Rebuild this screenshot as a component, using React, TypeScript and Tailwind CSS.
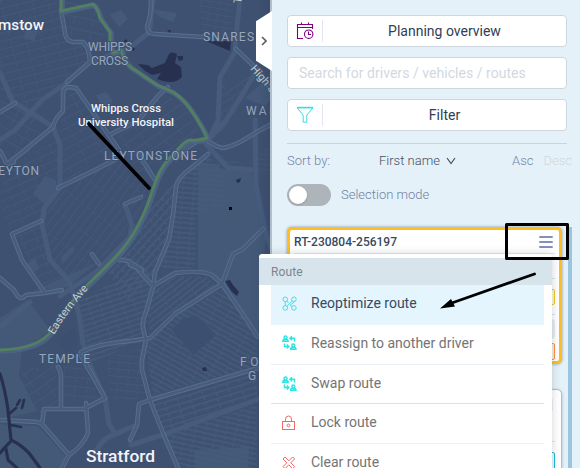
import React from "react";

type Patch = { points: string; angle: number; w: number; h: number; tone?: string };

const patches: Patch[] = [
  { points: "0,0 58,0 62,36 88,46 86,62 64,86 32,108 14,98 0,72", angle: -14, w: 15, h: 8 },
  { points: "64,0 92,4 108,35 104,46 66,38", angle: 12, w: 19, h: 12 },
  { points: "0,78 28,112 50,128 12,158 0,155", angle: 28, w: 17, h: 11 },
  { points: "66,92 76,92 114,150 60,186 60,130", angle: -28, w: 18, h: 9 },
  { points: "116,137 160,92 182,104 203,138 170,156 142,180", angle: -36, w: 17, h: 10 },
  { points: "4,168 58,140 58,188 42,210 12,232 0,205", angle: -24, w: 14, h: 8 },
  { points: "64,190 118,160 150,190 136,226 90,270 66,280 46,244 45,210", angle: -52, w: 22, h: 7 },
  { points: "16,236 41,223 48,263 70,286 45,292", angle: -22, w: 14, h: 9 },
  { points: "100,262 133,235 151,204 174,182 168,238 152,280 128,300", angle: -48, w: 8, h: 6, tone: "#465b7a" },
  { points: "176,184 205,154 225,170 227,205 196,215 195,268 160,270", angle: 5, w: 11, h: 5, tone: "#465b7a" },
  { points: "78,300 147,266 153,291 143,340 91,363", angle: -18, w: 11, h: 5, tone: "#465b7a" },
  { points: "147,292 175,276 207,277 219,289 177,312 149,333", angle: -38, w: 14, h: 5, tone: "#465b7a" },
  { points: "223,289 257,335 257,366 153,395 146,345 176,315", angle: 29, w: 13, h: 5, tone: "#465b7a" },
  { points: "151,404 257,372 257,403 164,432", angle: -17, w: 13, h: 6, tone: "#465b7a" },
  { points: "164,435 257,405 257,468 180,468", angle: 12, w: 10, h: 5, tone: "#465b7a" },
  { points: "20,370 56,364 59,404 40,413 25,393", angle: -35, w: 13, h: 10 },
  { points: "64,364 92,369 100,397 65,404", angle: 5, w: 12, h: 9 },
  { points: "106,357 143,347 146,397 112,404", angle: 5, w: 10, h: 7 },
  { points: "199,0 234,0 231,35 202,34", angle: 10, w: 9, h: 6 },
  { points: "217,88 254,75 238,107 220,137", angle: -34, w: 17, h: 7 },
  { points: "212,152 248,166 271,143 271,175 228,170", angle: 4, w: 12, h: 5 },
  { points: "240,190 256,183 266,226 238,246", angle: 25, w: 9, h: 6 },
];

const casedRoads = [
  "M61 10 L65 33 Q66 41 73 42 L83 42 Q89 47 90 62 L67 82",
  "M151 0 Q151 18 147 26 Q147 34 155 34 L203 37 M236 49 L257 69 L274 94",
  "M274 123 C253 132 238 147 222 148 C211 146 209 138 201 140 Q190 143 176 159",
  "M9 163 L53 127 Q55 118 63 111 L63 93 Q64 87 69 87 L76 88 L108 134 L119 150",
  "M109 135 L138 121 L158 96 L168 87",
  "M0 112 L15 103 M0 151 L7 164 L27 149",
  "M58 188 L97 169 L118 158 M14 162 L7 164",
  "M45 293 L22 260 L12 234 L41 221",
  "M0 278 L14 290 Q20 303 26 295 L45 293 L62 290 M92 254 L99 264 M115 259 L128 261 L142 270",
  "M125 204 L141 197 M138 153 L155 180",
  "M208 154 L190 169 Q177 178 176 187 L173 215 L169 239 L155 272 L153 287 L146 312 Q142 320 143 328 L146 340 L142 360 L142 370 L150 400 L163 433 L178 468",
  "M130 265 Q137 266 141 273 L153 286 L175 273 Q202 270 212 275 L222 284 L240 310 L258 337",
  "M222 284 L233 254 L243 249 L263 229 M222 284 L176 313 L150 338 L130 341 Q101 343 81 352",
  "M58 367 Q61 371 61 379 L61 408 M0 420 L37 422 L42 424 L44 409 L84 409 L105 398 M86 403 L88 433 Q83 446 69 455 L42 424 M69 455 L62 468",
  "M80 354 L91 373 L105 398 M150 400 L258 368 M150 400 L139 404 L137 425 L130 440",
];

const wideRoads = [
  "M90 62 L64 85 L42 100 L15 130 L0 140",
  "M0 73 L13 102 L35 115 L53 127 L60 145 L60 188 L44 208 L42 225 L50 260 L69 281 L75 299 L79 315 L83 343 L92 370 L105 398 L109 424 L114 432",
  "M240 0 L236 35 L235 52 L220 77 L218 121 L206 144 M257 70 L239 100 L225 122 L207 141",
  "M125 204 L132 225 L130 237 M60 296 L96 272 L130 237 M153 0 L150 28 M148 33 L130 48 L90 62",
  "M206 144 L228 168 L256 170 M255 120 L256 185 L265 230 L272 251",
  "M131 445 L165 434 L216 415 L259 399 M95 454 Q101 438 116 434 L136 425 M30 302 L0 327",
];

const parks = [
  "M133 47 L151 35 L201 40 L234 49 L218 77 L215 121 L207 135 L181 98 L151 78 L128 57 Z",
  "M37 188 L45 176 L56 180 L57 188 L44 204 L33 193 Z",
  "M26 30 L38 31 L34 41 L23 38 Z M110 15 L121 10 L128 19 L119 27 Z M96 95 L106 92 L113 101 L104 110 Z",
  "M61 257 L73 246 L75 250 L63 264 Z M25 265 L35 259 L39 269 L29 274 Z",
  "M151 9 L177 13 L173 22 L160 17 Z M245 98 L263 82 L272 98 L265 106 Z",
];

const green = "M61 -2 L61 11 L93 4 Q97 7 100 18 L110 32 L110 46 L113 53 L121 50 Q124 63 132 68 L157 85 L173 92 Q184 99 193 113 Q203 128 207 138 Q199 141 190 140 Q184 141 174 154 C154 171 155 190 143 215 C131 243 115 259 89 283 Q68 303 52 330 Q39 349 0 350";

function MapLabel({ x, y, width, size = 12, bright = false, children }: {
  x: number; y: number; width: number; size?: number; bright?: boolean; children: string;
}) {
  return (
    <text x={x} y={y} textLength={width} lengthAdjust={bright ? "spacingAndGlyphs" : "spacing"} fontSize={size} fontWeight={bright ? 500 : 400}
      fill={bright ? "#f1f4f8" : "#96a7bd"} stroke="#3e5070" strokeWidth="1.6" paintOrder="stroke">{children}</text>
  );
}

function CityMap() {
  return (
    <svg width="272" height="468" viewBox="0 0 272 468" className="block" fontFamily="Roboto, sans-serif">
      <defs>
        {patches.map((p, i) => (
          <pattern key={i} id={`streets${i}`} width={p.w} height={p.h} patternUnits="userSpaceOnUse" patternTransform={`rotate(${p.angle})`}>
            <path d={`M0 .5 H${p.w} M.5 0 V${p.h * 0.65}`} fill="none" stroke={p.tone ?? "#44587a"} strokeWidth={p.tone ? 1.8 : 0.9} />
          </pattern>
        ))}
        <linearGradient id="edge"><stop stopColor="#26344f" stopOpacity="0" /><stop offset="1" stopColor="#26344f" stopOpacity=".22" /></linearGradient>
      </defs>
      <rect width="272" height="468" fill="#3f5171" />
      <path d="M0 318 L28 300 L50 330 L28 348 L0 349 Z M0 352 L22 349 L19 376 L37 411 L0 420 Z M198 160 L226 170 L251 171 L266 235 L257 337 L223 282 L198 271 Z M194 450 L249 447 L248 468 L195 468 Z M33 291 L98 262 L68 287 Z M0 424 L38 426 L68 459 L60 468 L0 468 Z" fill="#445977" />
      <path d={parks[0]} fill="#3d4f70" />
      {parks.slice(1).map((d) => <path key={d} d={d} fill="#455a7a" />)}
      {patches.map((p, i) => <polygon key={i} points={p.points} fill={`url(#streets${i})`} />)}
      <path d="M172 330 L182 319 L197 316 L216 335 L193 355 Z M57 340 L74 329 L78 344 L66 353 Z" fill="#3d4f70" />
      <g fill="none" strokeLinejoin="round" strokeLinecap="round">
        {wideRoads.map((d) => <path key={d} d={d} stroke="#475c7d" strokeWidth="5" />)}
        {casedRoads.map((d) => <path key={d} d={d} stroke="#596f90" strokeWidth="4.5" />)}
        {casedRoads.map((d) => <path key={d} d={d} stroke="#485d7e" strokeWidth="2.7" />)}
        <path d={green} stroke="#4c6284" strokeWidth="5" transform="translate(1.3 1.3)" />
        <path d={green} stroke="#527f62" strokeWidth="3" />
        <g stroke="#27314f">
          <path d="M0 374 Q5 389 8 410 L11 440 M10 442 L0 453 M11 440 Q20 444 29 453 L40 468 M6 449 L8 460 L17 468" strokeWidth="3.2" />
          <path d="M8 415 L16 408 M17 405 L20 400 M22 408 L24 400 M11 425 L21 427" strokeWidth="2.6" />
        </g>
      </g>
      <g fill="#27314f">
        <path d="M206 41 L231 41 L230 51 Z M138 64 L148 65 L152 68 L165 63 L168 56 Q170 50 177 54 L175 63 L181 67 L182 77 Q174 86 157 79 L161 73 L152 75 L145 71 Z M177 56 L183 56 L183 60 L179 61 Z M131 47 L135 48 L134 51 L130 50 Z" />
        <path d="M225 281 L230 280 L233 285 L239 292 L237 296 L232 292 Z M236 180 L241 178 L240 182 L237 183 Z M202 368 L206 367 L207 371 L203 371 Z M167 30 L171 30 L170 33 Z M123 42 L126 39 L128 42 Z" />
      </g>
      <rect x="229" y="207" width="3" height="3" fill="#05070c" />
      <text x="-2" y="30" fontSize="15.5" fontWeight="500" fill="#f1f4f8" textLength="46" lengthAdjust="spacingAndGlyphs">mstow</text>
      <MapLabel x={88} y={51} width={44}>WHIPPS</MapLabel>
      <MapLabel x={91} y={65} width={37}>CROSS</MapLabel>
      <MapLabel x={203} y={41} width={51}>SNARES</MapLabel>
      <MapLabel x={246} y={115} width={41}>WANS</MapLabel>
      <MapLabel x={104} y={160} width={93}>LEYTONSTONE</MapLabel>
      <MapLabel x={-9} y={175} width={48}>LEYTON</MapLabel>
      <MapLabel x={39} y={363} width={51}>TEMPLE</MapLabel>
      <MapLabel x={240} y={366} width={40}>FORE</MapLabel>
      <MapLabel x={248} y={380} width={37}>GATE</MapLabel>
      <MapLabel x={91} y={112} width={70} size={11.5} bright>Whipps Cross</MapLabel>
      <MapLabel x={78} y={126} width={96} size={11.5} bright>University Hospital</MapLabel>
      <MapLabel x={86} y={462} width={69} size={17} bright>Stratford</MapLabel>
      <g fontSize="11" fill="#c4ced9" stroke="#42586f" strokeWidth="1.5" paintOrder="stroke">
        <text transform="translate(250 69) rotate(49)" textLength="46">High Stre</text>
        <text transform="translate(241 4) rotate(-80)">The</text>
        <path id="easternAve" d="M54 335 Q66 314 88 289" fill="none" stroke="none" />
        <text><textPath href="#easternAve" textLength="58">Eastern Ave</textPath></text>
      </g>
      <path d="M89 124 L149 188" stroke="#000" strokeWidth="3.8" strokeLinecap="round" />
      <rect x="257" width="15" height="468" fill="url(#edge)" />
      <rect x="270" width="2" height="468" fill="#b2bec9" />
    </svg>
  );
}

function CalendarIcon() {
  return (
    <svg width="18" height="18" viewBox="0 0 18 18" fill="none" stroke="#800080" strokeWidth="1.1">
      <path d="M7 16.5 H1.5 V2.5 H16.5 V7" /><path d="M1.5 5.5 H16.5 M5.5 .5 V3 M12.5 .5 V3" /><circle cx="12.7" cy="12.2" r="4.2" /><path d="M12.5 9.5 V12.5 H15" />
    </svg>
  );
}
function FunnelIcon() {
  return <svg width="18" height="18" viewBox="0 0 18 18" fill="none" stroke="#34dce9"><path d="M1.2 1.8 H16.8 L10.8 9.2 V16.2 H7.2 V9.2 Z" /><path d="M1 1.5 H17" strokeWidth="1.4" /></svg>;
}

function PanelButton({ children, icon }: { children: React.ReactNode; icon: React.ReactNode }) {
  return (
    <button className="flex h-8 w-[280px] items-center rounded border border-[#cfd7de] bg-white text-[14px] text-[#303e53]">
      <span className="flex h-[22px] w-[35px] items-center justify-center border-r border-[#e3e6ef]">{icon}</span>
      <span className="flex-1 text-center">{children}</span>
    </button>
  );
}

function RouteIcon() {
  return (
    <svg width="16" height="16" viewBox="0 0 16 16" fill="none" stroke="#45dfe8">
      <circle cx="3.3" cy="3.3" r="2.3" /><circle cx="11.9" cy="3.3" r="2.3" /><circle cx="3.3" cy="11.9" r="2.3" /><circle cx="11.9" cy="11.9" r="2.3" />
      <path d="M3.3 5.6 V9.6 M4.8 5 L6.4 6.8 M10.3 5 L5 10.2 M11.9 5.6 V6.4 L8.6 8.6 V9.6 L10.2 10.4" />
    </svg>
  );
}
function TransferIcon() {
  return (
    <svg width="16" height="16" viewBox="0 0 16 16" fill="none" stroke="#2ee5e3" strokeWidth="1.5">
      <circle cx="3.5" cy="2.5" r="1.5" /><path d="M.8 6.3 Q.8 4.6 2.5 4.6 H4.5 Q6.2 4.6 6.2 6.3 Z" />
      <circle cx="11.3" cy="10.5" r="1.5" /><path d="M8.6 14.3 Q8.6 12.6 10.3 12.6 H12.3 Q14 12.6 14 14.3 Z" />
      <path d="M12.5 6.5 V3.3 H8.3 M10 1.3 L8 3.3 L10 5.3 M2.5 8.5 V11.5 H6.3 M4.8 9.5 L6.8 11.5 L4.8 13.5" />
    </svg>
  );
}
function LockIcon() {
  return <svg width="16" height="16" viewBox="0 0 16 16" fill="none" stroke="#f46861"><rect x=".5" y="6.5" width="12" height="8" /><path d="M3.5 6.5 V4.2 Q3.5 1 6.5 1 Q9.5 1 9.5 4.2 V6.5" /><circle cx="6.5" cy="10.5" r="1.4" /></svg>;
}
function ClearIcon() {
  return <svg width="16" height="16" viewBox="0 0 16 16" fill="none" stroke="#f46861"><path d="M3 2 L6.8 5.8 L10.6 2 L12.6 4 L8.8 7.8 L12.6 11.6 L10.6 13.6 L6.8 9.8 L3 13.6 L1 11.6 L4.8 7.8 L1 4 Z" /></svg>;
}

function MenuRow({ icon, label, className }: { icon: React.ReactNode; label: string; className: string }) {
  return (
    <div className={`ml-3 flex w-[273px] items-center pl-[11px] text-[14px] ${className}`}>
      <span className="mr-[13px] flex w-4 shrink-0">{icon}</span><span className="whitespace-nowrap">{label}</span>
    </div>
  );
}

export default function App() {
  return (
    <div className="relative flex h-[468px] w-[580px] overflow-hidden bg-[#e5f1f8] font-[Roboto,sans-serif]">
      <div className="w-[272px] shrink-0"><CityMap /></div>
      <main className="flex w-[308px] flex-col pl-[15px] pt-[15px]">
        <div className="flex flex-col gap-[10px]">
          <PanelButton icon={<CalendarIcon />}>Planning overview</PanelButton>
          <div className="flex h-8 w-[280px] items-center rounded border border-[#cfd7de] bg-white pl-[11px] text-[14px] tracking-[0.04px] text-[#d2d8df]">Search for drivers / vehicles / routes</div>
          <PanelButton icon={<FunnelIcon />}>Filter</PanelButton>
        </div>
        <div className="mt-3 flex h-[35px] w-[280px] items-center border-t border-[#c8d4df] text-[13px] font-light text-[#7582a8]">
          <span className="w-[92px]">Sort by:</span><span className="text-[#435065]">First name</span>
          <svg className="ml-[6px]" width="10" height="8" viewBox="0 0 10 8" fill="none" stroke="#3f4e64" strokeWidth="1.2"><path d="M1 1 L5 6.5 L9 1" /></svg>
          <span className="ml-auto">Asc</span><span className="-mr-[5px] ml-[10px] text-[#cfd7e0]">Desc</span>
        </div>
        <div className="mt-[6px] flex h-[22px] items-center text-[13px] font-light text-[#7180a6]">
          <span className="mr-[10px] flex h-[22px] w-11 items-center rounded-full bg-[#adb4ba] p-[2px]"><i className="h-[18px] w-[18px] rounded-full bg-white shadow" /></span>
          Selection mode
        </div>
        <div className="mt-[21px] flex h-[241px] w-[285px] justify-between">
          <div className="w-[275px]">
            <section className="h-[137px] rounded-[5px] border-[3px] border-[#ffbd20] bg-white shadow-[0_0_3px_#8293ad]">
              <header className="mx-1 flex h-6 items-center justify-between border-b border-[#e4e8ec] pr-[2px] text-[12px] font-medium text-[#35495d]">
                <span>RT-230804-256197</span>
                <svg width="14" height="14" viewBox="0 0 14 14" fill="none" stroke="#8490b7" strokeWidth="2" strokeLinecap="round"><path d="M1 1 H13 M1 6 H13 M1 11 H13" transform="translate(0 1)" /></svg>
              </header>
              <div className="ml-auto mr-[4px] flex w-[22px] flex-col pt-[24px]">
                <div className="h-[11px] border-t border-[#dde1e5]" /><div className="h-4 rounded-[2px] border border-[#f1c51e] bg-[#fff6d8]" />
                <div className="mt-[9px] h-[5px] border-t border-[#dde1e5]" /><div className="h-5 rounded bg-[#e6ebef]" />
                <div className="mt-1 h-[17px] rounded-[2px] border border-[#fa8f44] bg-[#ffe9dc]" />
              </div>
            </section>
            <section className="mt-[25px] h-[90px] rounded-t-[5px] border border-[#b6bccd] bg-white pl-[243px] pr-[6px] pt-[9px] shadow-[0_1px_3px_#a5b1c4]">
              <div className="h-3 w-[22px] border-y border-r border-[#eef0f2]" /><div className="mt-[30px] h-[11px] border-t border-[#dfe3e7]" /><div className="h-5 rounded-[2px] border border-[#1abad9] bg-[#e8faff]" />
            </section>
          </div>
          <div className="w-1 bg-[#9bc4df]" />
        </div>
      </main>

      <div className="absolute left-[256px] top-[11px] flex h-[60px] w-4 items-center justify-center bg-white [clip-path:polygon(100%_0,0_17%,0_83%,100%_100%)]">
        <svg width="6" height="10" viewBox="0 0 6 10" fill="none" stroke="#5b6064" strokeWidth="1.6"><path d="M1 1 L5 5 L1 9" /></svg>
      </div>
      <nav className="absolute left-[259px] top-[254px] h-[230px] w-[293px] rounded-t-[3px] bg-white pt-1 shadow-[0_0_8px_#40506740]">
        <div className="flex h-[27px] items-center bg-[#d7e4ec] pl-3 text-[12px] tracking-[0.1px] text-[#7b858e]">Route</div>
        <MenuRow icon={<RouteIcon />} label="Reoptimize route" className="h-10 bg-[#e5f5fe] pb-[3px] text-[#354b5e]" />
        <MenuRow icon={<TransferIcon />} label="Reassign to another driver" className="h-10 border-b border-[#e8eef2] pb-[3px] text-[#747474]" />
        <MenuRow icon={<TransferIcon />} label="Swap route" className="h-[39px] border-b border-[#d5e3ea] pb-[1px] text-[#747474]" />
        <MenuRow icon={<LockIcon />} label="Lock route" className="h-10 border-b border-[#edf0f2] pb-[2px] text-[#747474]" />
        <MenuRow icon={<ClearIcon />} label="Clear route" className="h-10 pb-[3px] text-[#747474]" />
      </nav>
      <svg className="pointer-events-none absolute inset-0" width="580" height="468" viewBox="0 0 580 468">
        <rect x="506.5" y="224.5" width="61" height="34" fill="none" stroke="#000" strokeWidth="3" strokeLinejoin="round" />
        <path d="M534.5 274 L449 304" stroke="#000" strokeWidth="2.8" strokeLinecap="round" /><path d="M440 308.5 L451 299 L455 306.5 Z" fill="#000" />
      </svg>
    </div>
  );
}
